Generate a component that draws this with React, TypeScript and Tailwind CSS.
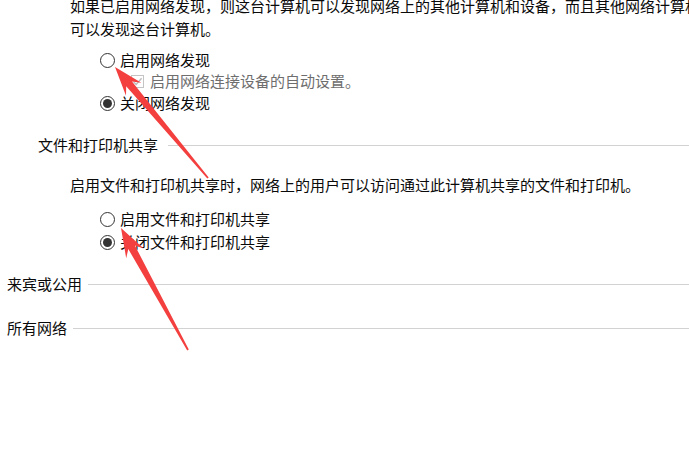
import React from "react";

type Pt = [number, number];

// red annotation arrow, tip -> tail, drawn as one polygon
const arrowPoints = (tip: Pt, tail: Pt) => {
  const dx = tail[0] - tip[0];
  const dy = tail[1] - tip[1];
  const len = Math.hypot(dx, dy);
  const u: Pt = [dx / len, dy / len];
  const n: Pt = [-u[1], u[0]];
  const at = (d: number, w: number): Pt => [
    tip[0] + u[0] * d + n[0] * w,
    tip[1] + u[1] * d + n[1] * w,
  ];
  const pts: Pt[] = [
    tip,
    at(29, 10),
    at(22, 3.8),
    at(len, 0.9),
    at(len, -0.9),
    at(22, -3.8),
    at(29, -10),
  ];
  return pts.map((p) => `${p[0].toFixed(1)},${p[1].toFixed(1)}`).join(" ");
};

const Radio = ({ checked, label }: { checked?: boolean; label: string }) => (
  <div className="flex h-[23px] items-center gap-[5px] pl-[100px]">
    <span className="flex h-[15px] w-[15px] items-center justify-center rounded-full border border-[#333333] bg-white">
      {checked && <span className="h-[9px] w-[9px] rounded-full bg-[#333333]" />}
    </span>
    <span>{label}</span>
  </div>
);

const Section = ({ title, indent, gap }: { title: string; indent: string; gap: string }) => (
  <div className={`flex h-[23px] items-center ${indent} ${gap}`}>
    <span className="whitespace-nowrap">{title}</span>
    <div className="h-px flex-1 bg-[#d2d2d2]" />
  </div>
);

export default function App() {
  return (
    <div
      className="relative h-[449px] w-[689px] overflow-hidden bg-white text-[15px] text-[#0a0a0a]"
      style={{ fontFamily: '"Noto Sans CJK SC", "Noto Sans", sans-serif' }}
    >
      <div className="-mt-[6px] pl-[70px] leading-[23px] whitespace-nowrap">
        <div>如果已启用网络发现，则这台计算机可以发现网络上的其他计算机和设备，而且其他网络计算机也</div>
        <div>可以发现这台计算机。</div>
      </div>

      <div className="mt-[9px]">
        <div className="flex h-[22px] items-center gap-[5px] pl-[100px]">
          <span className="h-[15px] w-[15px] rounded-full border border-[#333333] bg-white" />
          <span>启用网络发现</span>
        </div>
        <div className="flex h-[20px] items-center gap-[6px] pl-[131px] text-[#6e6e6e]">
          <span className="flex h-[13px] w-[13px] items-center justify-center border border-[#c4c4c4] bg-white">
            <svg width="11" height="11" viewBox="0 0 11 11">
              <path d="M1.5 5.8 L4.2 8.5 L9.6 2.2" fill="none" stroke="#bdbdbd" strokeWidth="1.4" />
            </svg>
          </span>
          <span>启用网络连接设备的自动设置。</span>
        </div>
        <div className="mt-[1px] flex h-[22px] items-center gap-[5px] pl-[100px]">
          <span className="flex h-[15px] w-[15px] items-center justify-center rounded-full border border-[#333333] bg-white">
            <span className="h-[9px] w-[9px] rounded-full bg-[#333333]" />
          </span>
          <span>关闭网络发现</span>
        </div>
      </div>

      <div className="mt-[20px]">
        <Section title="文件和打印机共享" indent="pl-[38px]" gap="gap-[10px]" />
      </div>

      <div className="mt-[17px] flex h-[23px] items-center pl-[70px]">
        启用文件和打印机共享时，网络上的用户可以访问通过此计算机共享的文件和打印机。
      </div>

      <div className="mt-[11px]">
        <Radio label="启用文件和打印机共享" />
        <Radio checked label="关闭文件和打印机共享" />
      </div>

      <div className="mt-[19px]">
        <Section title="来宾或公用" indent="pl-[7px]" gap="gap-[6px]" />
      </div>
      <div className="mt-[21px]">
        <Section title="所有网络" indent="pl-[7px]" gap="gap-[6px]" />
      </div>

      {/* annotation arrows */}
      <svg className="pointer-events-none absolute left-0 top-0" width="689" height="449">
        <polygon points={arrowPoints([115, 67], [208, 178])} fill="#f43f3f" />
        <polygon points={arrowPoints([121, 228], [188, 350])} fill="#f43f3f" />
      </svg>
    </div>
  );
}
